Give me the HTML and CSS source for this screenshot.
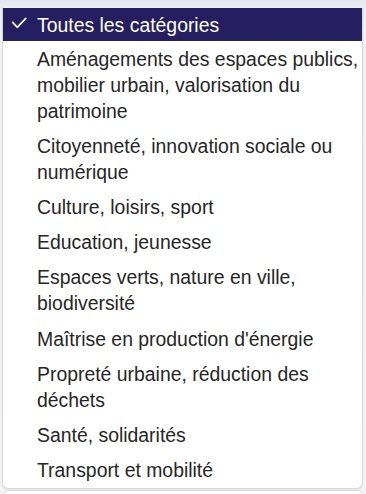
FILE: index.html
```html
<!DOCTYPE html>
<html lang="fr">
<head>
<meta charset="utf-8">
<title>Catégories</title>
<link rel="stylesheet" href="styles.css">
</head>
<body>
<div class="menu">
  <ul class="list">
    <li class="opt selected"><svg class="check" width="16" height="14" viewBox="0 0 16 14"><path d="M1.7 5.4 L6.2 10.3 L14.8 1.3" fill="none" stroke="#fff" stroke-width="1.7" stroke-linecap="round" stroke-linejoin="round"/></svg><span>Toutes les catégories</span></li>
    <li class="opt">Aménagements des espaces publics, mobilier urbain, valorisation du patrimoine</li>
    <li class="opt">Citoyenneté, innovation sociale ou numérique</li>
    <li class="opt">Culture, loisirs, sport</li>
    <li class="opt">Education, jeunesse</li>
    <li class="opt">Espaces verts, nature en ville, biodiversité</li>
    <li class="opt">Maîtrise en production d'énergie</li>
    <li class="opt">Propreté urbaine, réduction des déchets</li>
    <li class="opt">Santé, solidarités</li>
    <li class="opt">Transport et mobilité</li>
  </ul>
</div>
<div class="select-edge"></div>
</body>
</html>
```
FILE: styles.css
```css
html, body {
  margin: 0;
  padding: 0;
}
body {
  height: 494px;
  overflow: hidden;
  background: linear-gradient(#e1e6ee 0, #e9edf2 6px, #f3f3f4 40px, #f4f4f4 100%);
  font-family: "Liberation Sans", Arial, Helvetica, sans-serif;
}
.menu {
  margin: 7px 3px 0 2px;
  background: #fff;
  border: 1px solid #d8d8d8;
  border-top: 1px solid #eef0f4;
  border-radius: 0 0 6px 6px;
  box-shadow: 0 1px 2px rgba(0,0,0,0.06);
}
.list {
  list-style: none;
  margin: 0;
  padding: 0;
}
.opt {
  font-size: 19.4px;
  line-height: 26px;
  color: #262626;
  padding: 4.6px 2px 4.6px 34px;
}
.opt.selected {
  display: flex;
  align-items: center;
  padding: 3.5px 2px 3.5px 8px;
  background: #251f62;
  color: #fff;
}
.check {
  flex: none;
  margin-right: 10px;
  margin-top: -1px;
}
.select-edge {
  margin: 1px 3px 0 3px;
  height: 20px;
  background: #fff;
  border: 1px solid #dadada;
  border-radius: 5px;
}
```
